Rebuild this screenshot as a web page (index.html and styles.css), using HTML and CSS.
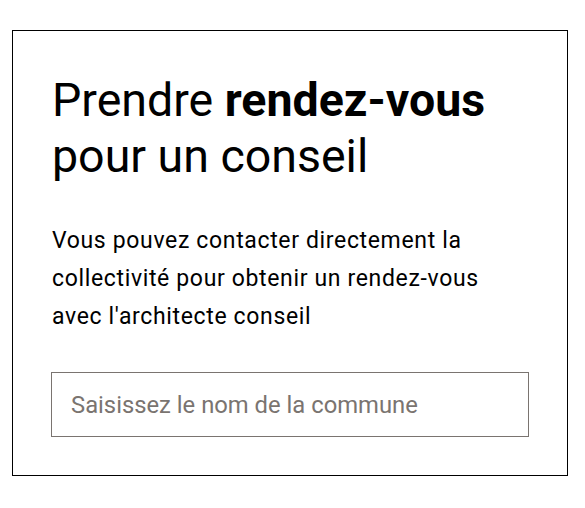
FILE: index.html
```html
<!DOCTYPE html>
<html lang="fr">
<head>
<meta charset="utf-8">
<title>Prendre rendez-vous</title>
<link rel="stylesheet" href="styles.css">
</head>
<body>
<section class="card">
  <h2 class="card-title">Prendre <strong>rendez-vous</strong> pour un conseil</h2>
  <p class="card-text">Vous pouvez contacter directement la collectivité pour obtenir un rendez-vous avec l'architecte conseil</p>
  <input class="search" type="text" placeholder="Saisissez le nom de la commune">
</section>
</body>
</html>
```

FILE: styles.css
```css
html, body {
  margin: 0;
  padding: 0;
  background: #fff;
}
body {
  font-family: Roboto, "Noto Sans", sans-serif;
  color: #000;
  padding: 30px 0 0 12px;
}
.card {
  box-sizing: border-box;
  width: 556px;
  height: 446px;
  border: 1px solid #000;
  padding: 41px 38px 0 38px;
  display: flex;
  flex-direction: column;
}
.card-title {
  margin: 0 0 0 1px;
  font-size: 46.5px;
  line-height: 56px;
  font-weight: 400;
  width: 470px;
}
.card-title strong {
  font-weight: 700;
}
.card-text {
  margin: 38px 0 0 1px;
  font-size: 23px;
  letter-spacing: 0.65px;
  line-height: 38px;
  width: 460px;
}
.search {
  box-sizing: border-box;
  margin-top: 36px;
  width: 478px;
  height: 65px;
  border: 1px solid #7a7470;
  border-radius: 0;
  padding: 0 19px;
  font-family: Roboto, sans-serif;
  font-size: 23.8px;
  color: #000;
  outline: none;
}
.search::placeholder {
  color: #7a7470;
  opacity: 1;
}
```
